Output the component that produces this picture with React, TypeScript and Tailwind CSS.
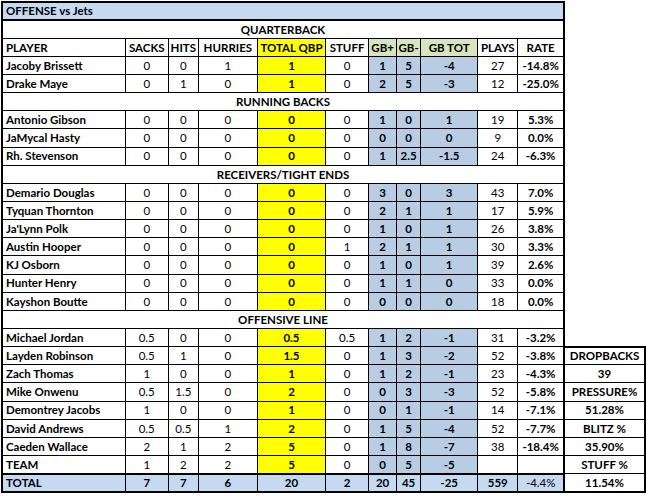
import React from 'react';

type Row = (string | number)[];

interface Group {
  title: string;
  rows: Row[];
}

const qbRows: Row[] = [
  ['Jacoby Brissett', 0, 0, 1, 1, 0, 1, 5, -4, 27, '-14.8%'],
  ['Drake Maye', 0, 1, 0, 1, 0, 2, 5, -3, 12, '-25.0%'],
];

const groups: Group[] = [
  {
    title: 'RUNNING BACKS',
    rows: [
      ['Antonio Gibson', 0, 0, 0, 0, 0, 1, 0, 1, 19, '5.3%'],
      ['JaMycal Hasty', 0, 0, 0, 0, 0, 0, 0, 0, 9, '0.0%'],
      ['Rh. Stevenson', 0, 0, 0, 0, 0, 1, 2.5, -1.5, 24, '-6.3%'],
    ],
  },
  {
    title: 'RECEIVERS/TIGHT ENDS',
    rows: [
      ['Demario Douglas', 0, 0, 0, 0, 0, 3, 0, 3, 43, '7.0%'],
      ['Tyquan Thornton', 0, 0, 0, 0, 0, 2, 1, 1, 17, '5.9%'],
      ["Ja'Lynn Polk", 0, 0, 0, 0, 0, 1, 0, 1, 26, '3.8%'],
      ['Austin Hooper', 0, 0, 0, 0, 1, 2, 1, 1, 30, '3.3%'],
      ['KJ Osborn', 0, 0, 0, 0, 0, 1, 0, 1, 39, '2.6%'],
      ['Hunter Henry', 0, 0, 0, 0, 0, 1, 1, 0, 33, '0.0%'],
      ['Kayshon Boutte', 0, 0, 0, 0, 0, 0, 0, 0, 18, '0.0%'],
    ],
  },
  {
    title: 'OFFENSIVE LINE',
    rows: [
      ['Michael Jordan', 0.5, 0, 0, 0.5, 0.5, 1, 2, -1, 31, '-3.2%'],
      ['Layden Robinson', 0.5, 1, 0, 1.5, 0, 1, 3, -2, 52, '-3.8%'],
      ['Zach Thomas', 1, 0, 0, 1, 0, 1, 2, -1, 23, '-4.3%'],
      ['Mike Onwenu', 0.5, 1.5, 0, 2, 0, 0, 3, -3, 52, '-5.8%'],
      ['Demontrey Jacobs', 1, 0, 0, 1, 0, 0, 1, -1, 14, '-7.1%'],
      ['David Andrews', 0.5, 0.5, 1, 2, 0, 1, 5, -4, 52, '-7.7%'],
      ['Caeden Wallace', 2, 1, 2, 5, 0, 1, 8, -7, 38, '-18.4%'],
      ['TEAM', 1, 2, 2, 5, 0, 0, 5, -5, '', ''],
    ],
  },
];

const headers = ['PLAYER', 'SACKS', 'HITS', 'HURRIES', 'TOTAL QBP', 'STUFF', 'GB+', 'GB-', 'GB TOT', 'PLAYS', 'RATE'];

const totals: Row = ['TOTAL', 7, 7, 6, 20, 2, 20, 45, -25, 559, '-4.4%'];

const summary = ['DROPBACKS', '39', 'PRESSURE%', '51.28%', 'BLITZ %', '35.90%', 'STUFF %', '11.54%'];

const cell = 'border border-black h-[18.15px] p-0 text-center leading-none whitespace-nowrap';

function dataCellClass(i: number) {
  if (i === 0) return `${cell} text-left pl-[3px] font-bold`;
  if (i === 4) return `${cell} bg-[#ffff00] font-bold`;
  if (i >= 6 && i <= 8) return `${cell} bg-[#b8cce4] font-bold`;
  if (i === 10) return `${cell} font-bold`;
  return cell;
}

function headerCellClass(i: number) {
  if (i === 0) return `${cell} text-left pl-[3px] font-bold`;
  if (i === 4) return `${cell} bg-[#ffff00] font-bold`;
  if (i >= 6 && i <= 8) return `${cell} bg-[#d8e4bc] font-bold`;
  return `${cell} font-bold`;
}

function SectionRow({ title }: { title: string }) {
  return (
    <tr>
      <td colSpan={11} className={`${cell} font-bold`}>
        {title}
      </td>
    </tr>
  );
}

function DataRow({ row }: { row: Row }) {
  return (
    <tr>
      {row.map((v, i) => (
        <td key={i} className={dataCellClass(i)}>
          {v}
        </td>
      ))}
    </tr>
  );
}

export default function App() {
  return (
    <div className="w-[646px] h-[496px] bg-white pt-px pl-px font-['Lato','Liberation_Sans',sans-serif] text-[11.5px] text-black">
      <div className="flex items-end">
        {/* Main stat sheet */}
        <table className="table-fixed border-collapse border-2 border-black w-[564px]">
          <colgroup>
            <col className="w-[123px]" />
            <col className="w-[43px]" />
            <col className="w-[30px]" />
            <col className="w-[59px]" />
            <col className="w-[68px]" />
            <col className="w-[43px]" />
            <col className="w-[28px]" />
            <col className="w-[24px]" />
            <col className="w-[57px]" />
            <col className="w-[40px]" />
            <col className="w-[46px]" />
          </colgroup>
          <tbody>
            <tr>
              <td colSpan={11} className={`${cell} border-b-2 bg-[#c5d9f1] text-left pl-[3px] font-bold`}>
                OFFENSE vs Jets
              </td>
            </tr>
            <SectionRow title="QUARTERBACK" />
            <tr>
              {headers.map((h, i) => (
                <td key={h} className={headerCellClass(i)}>
                  {h}
                </td>
              ))}
            </tr>
            {qbRows.map((r) => (
              <DataRow key={r[0] as string} row={r} />
            ))}
            {groups.map((g) => (
              <React.Fragment key={g.title}>
                <SectionRow title={g.title} />
                {g.rows.map((r) => (
                  <DataRow key={r[0] as string} row={r} />
                ))}
              </React.Fragment>
            ))}
            <tr className="bg-[#c5d9f1]">
              {totals.map((v, i) => (
                <td
                  key={i}
                  className={`${cell} border-t-2 ${i === 0 ? 'text-left pl-[3px]' : ''} ${i === 10 ? 'font-normal' : 'font-bold'}`}
                >
                  {v}
                </td>
              ))}
            </tr>
          </tbody>
        </table>

        {/* Pass rush summary box */}
        <table className="border-collapse border-2 border-l-0 border-black w-[82px] -ml-px">
          <tbody>
            {summary.map((s) => (
              <tr key={s}>
                <td className={`${cell} font-bold`}>{s}</td>
              </tr>
            ))}
          </tbody>
        </table>
      </div>
    </div>
  );
}
